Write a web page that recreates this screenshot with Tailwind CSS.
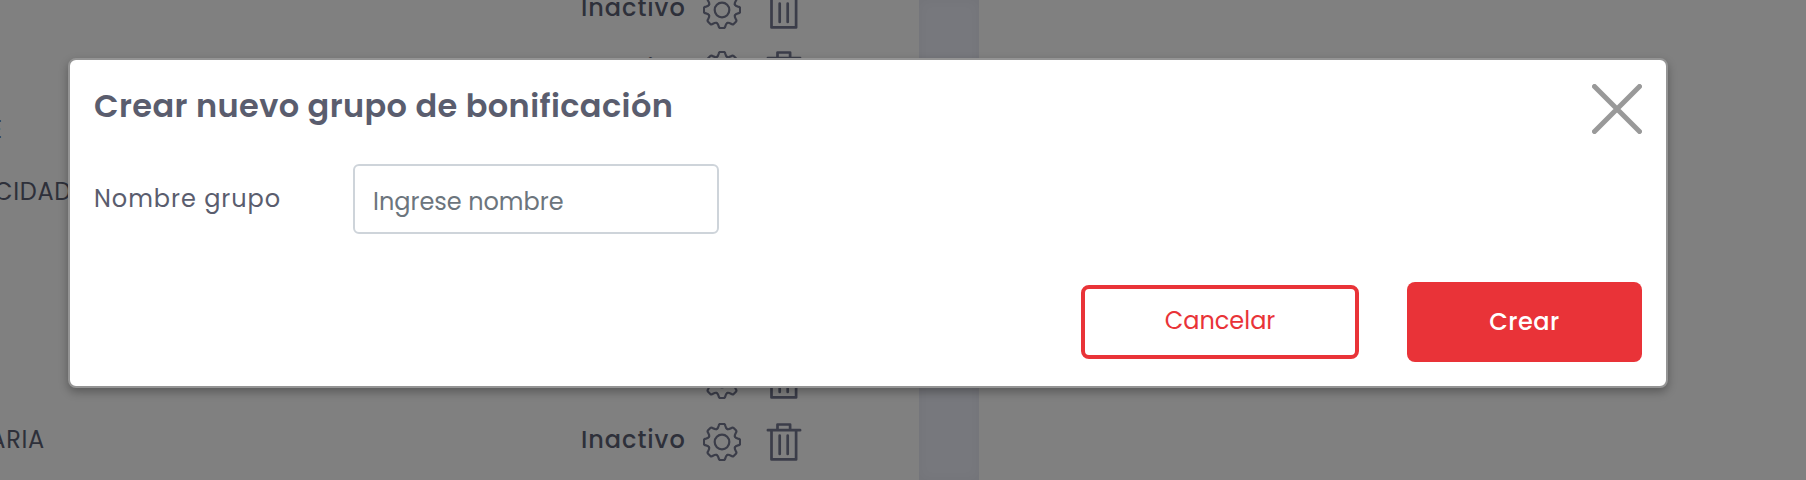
<!DOCTYPE html>
<html lang="es">
<head>
<meta charset="utf-8">
<title>Crear nuevo grupo de bonificación</title>
<script src="https://cdn.jsdelivr.net/npm/@tailwindcss/browser@4"></script>
</head>
<body class="relative h-[480px] w-[1806px] overflow-hidden bg-[#808080] font-[Poppins,Inter,sans-serif] text-[24px] text-[#2e303a]">
<svg class="hidden">
  <defs>
    <path id="tooth" d="M-5.36-12.93C-4-13.5-3.7-14.5-3.4-16Q-3.1-18.1-1.6-18.1H1.6Q3.1-18.1 3.4-16C3.7-14.5 4-13.5 5.36-12.93"/>
    <symbol id="gear" viewBox="-19 -19 38 38">
      <g fill="none" stroke="#3b3d49" stroke-width="2.2" stroke-linecap="round">
        <circle r="7.3"/>
        <use href="#tooth"/><use href="#tooth" transform="rotate(45)"/><use href="#tooth" transform="rotate(90)"/><use href="#tooth" transform="rotate(135)"/>
        <use href="#tooth" transform="rotate(180)"/><use href="#tooth" transform="rotate(225)"/><use href="#tooth" transform="rotate(270)"/><use href="#tooth" transform="rotate(315)"/>
      </g>
    </symbol>
    <symbol id="trash" viewBox="0 0 36 38">
      <g fill="none" stroke="#3b3d49" stroke-width="2.7" stroke-linecap="round" stroke-linejoin="round">
        <path d="M1.9 7.2H34.1M5.5 7.2V36.4H30.1V7.2M11.5 7V1.5H24.1V7"/>
        <path d="M13.7 12.5V31M21.7 12.5V31"/>
      </g>
    </symbol>
  </defs>
</svg>

<div class="flex h-[480px]">
  <main class="-mt-[21px] w-[919px] shrink-0">
    <div class="flex h-[60px] items-center pt-[2px]"><span class="w-[581px]"></span><span class="-mt-[5px] w-[122px] font-medium tracking-[0.96px]">Inactivo</span><svg class="size-[38px]"><use href="#gear"/></svg><svg class="ml-[25px] h-[38px] w-9"><use href="#trash"/></svg></div>
    <div class="flex h-[62px] items-center"><span class="w-[581px]"></span><span class="-mt-[3px] w-[122px] font-medium tracking-[0.96px]">Inactivo</span><svg class="size-[38px]"><use href="#gear"/></svg><svg class="ml-[25px] h-[38px] w-9"><use href="#trash"/></svg></div>
    <div class="flex h-[62px] items-center"><span class="-mt-[4px] flex w-[2px] justify-end">E</span></div>
    <div class="flex h-[62px] items-center"><span class="-mt-[4px] flex w-[72px] justify-end tracking-[0.7px]">CIDAD</span></div>
    <div class="h-[62px]"></div>
    <div class="h-[62px]"></div>
    <div class="flex h-[62px] items-center"><span class="w-[703px]"></span><svg class="size-[38px]"><use href="#gear"/></svg><svg class="ml-[25px] h-[38px] w-9"><use href="#trash"/></svg></div>
    <div class="flex h-[62px] items-center"><span class="-mt-[5px] flex w-[45px] justify-end tracking-[0.7px]">ARIA</span><span class="w-[536px]"></span><span class="-mt-[5px] w-[122px] font-medium tracking-[0.96px]">Inactivo</span><svg class="size-[38px]"><use href="#gear"/></svg><svg class="ml-[25px] h-[38px] w-9"><use href="#trash"/></svg></div>
  </main>
  <div class="w-[60px] shrink-0 bg-[#77787d] shadow-[inset_0_0_12px_rgba(0,0,0,0.04)]"></div>
</div>

<section role="dialog" class="absolute left-[68px] top-[58px] flex h-[330px] w-[1600px] flex-col rounded-lg border-2 border-[#949494] bg-white pl-6 pr-6 text-[#5a5d6e] shadow-[0_4px_10px_rgba(0,0,0,0.3)]">
  <header class="flex h-[102px] justify-between">
    <h1 class="mt-[26px] text-[32px] font-semibold leading-10 tracking-[0.4px]">Crear nuevo grupo de bonificación</h1>
    <svg class="mt-6 size-[50px]" viewBox="0 0 50 50" fill="none" stroke="#999" stroke-width="5" stroke-linecap="round"><path d="M2.5 2.5L47.5 47.5M47.5 2.5L2.5 47.5"/></svg>
  </header>
  <div class="flex h-[120px]">
    <label class="mt-[21px] w-[259px] leading-8 tracking-[0.96px]">Nombre grupo</label>
    <div class="mt-[2px] flex h-[70px] w-[366px] items-center rounded-[6px] border-2 border-[#ced4da] pl-[18px] pt-[6px] text-[#6c757d]">Ingrese nombre</div>
  </div>
  <footer class="flex justify-end gap-12">
    <button class="mt-[3px] flex h-[74px] w-[278px] items-center justify-center rounded-lg border-4 border-[#e93338] pb-[2px] text-[#e93338]">Cancelar</button>
    <button class="flex h-20 w-[235px] items-center justify-center rounded-lg bg-[#e93338] font-medium tracking-[0.5px] text-white">Crear</button>
  </footer>
</section>
</body>
</html>
